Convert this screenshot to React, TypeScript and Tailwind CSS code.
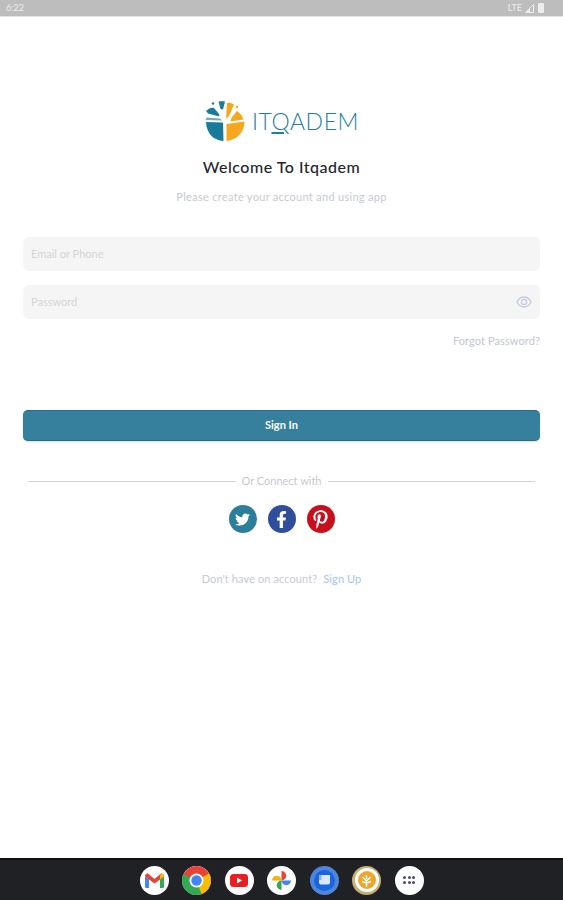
import { FaTwitter, FaFacebookF, FaPinterestP } from "react-icons/fa";

function TreeMark({ size }: { size: number }) {
  return (
    <svg width={size} height={size} viewBox="0 0 41 41">
      <path d="M2 22 L19 22.5 L19.5 41 C9 40.5 2.5 33 2 22 Z" fill="#1a7a99" />
      <path d="M22.5 41 L22.5 24 L40.5 21.5 C40.5 32 33 40 22.5 41 Z" fill="#f5a81f" />
      <path d="M28 17 L33 11 C36 13 38.5 16 39.5 19.5 L26 21.5 Z" fill="#f5a81f" />
      <path d="M22 19 L23 3 C25 2.5 28 3 30 4.5 L25.5 15 Z" fill="#f5a81f" />
      <path d="M14.5 1.5 C16.5 1 19 1 21 1.5 L19 9.5 L16.5 9 Z" fill="#1a7a99" />
      <path d="M2 11 C5 8 8 7 10 8 L15 14 L15.5 16.5 L4 13.5 Z" fill="#1a7a99" />
      <path d="M2.5 17.5 L16 18.5 L18 20.5 L1.5 20 Z" fill="#7aa9b8" />
      <circle cx="9" cy="3.5" r="1.2" fill="#1a7a99" />
      <circle cx="33" cy="7" r="1.2" fill="#f5a81f" />
    </svg>
  );
}

function DockIcon({ children, bg = "bg-white" }: { children: React.ReactNode; bg?: string }) {
  return (
    <div className={`flex h-[29px] w-[29px] items-center justify-center overflow-hidden rounded-full ${bg}`}>
      {children}
    </div>
  );
}

function Dock() {
  return (
    <div className="flex h-[42px] items-center justify-center gap-[13.5px] border-t-2 border-[#0e0f11] bg-[#202124]">
      <DockIcon>
        <svg width="19" height="15" viewBox="0 0 19 15">
          <path d="M0 3 L0 13.5 Q0 15 1.5 15 L4 15 L4 6 Z" fill="#4285f4" />
          <path d="M19 3 L19 13.5 Q19 15 17.5 15 L15 15 L15 6 Z" fill="#34a853" />
          <path d="M0 3 Q0 0 3 0.6 L9.5 6 L16 0.6 Q19 0 19 3 L15 6.5 L9.5 10.5 L4 6.5 Z" fill="#ea4335" />
          <path d="M15 2.8 L16 0.6 Q19 0 19 3 L15 6.5 Z" fill="#fbbc04" />
        </svg>
      </DockIcon>
      <DockIcon>
        <svg width="29" height="29" viewBox="0 0 29 29">
          <circle cx="14.5" cy="14.5" r="14.5" fill="#ea4335" />
          <path d="M14.5 14.5 L27 7.5 A14.5 14.5 0 0 1 14.5 29 Z" fill="#fbbc04" />
          <path d="M14.5 14.5 L20 29 A14.5 14.5 0 0 1 1.5 8 Z" fill="#34a853" />
          <circle cx="14.5" cy="14.5" r="7" fill="#fff" />
          <circle cx="14.5" cy="14.5" r="5.2" fill="#4285f4" />
        </svg>
      </DockIcon>
      <DockIcon>
        <svg width="18" height="13" viewBox="0 0 18 13">
          <rect width="18" height="13" rx="3.5" fill="#ea1d25" />
          <path d="M7 3.5 L12 6.5 L7 9.5 Z" fill="#fff" />
        </svg>
      </DockIcon>
      <DockIcon>
        <svg width="21" height="21" viewBox="0 0 21 21">
          <path d="M1 10.5 A4.75 4.75 0 0 1 10.5 10.5 Z" fill="#f5b400" />
          <path d="M10.5 1 A4.75 4.75 0 0 1 10.5 10.5 Z" fill="#ea4335" />
          <path d="M20 10.5 A4.75 4.75 0 0 1 10.5 10.5 Z" fill="#4285f4" />
          <path d="M10.5 20 A4.75 4.75 0 0 1 10.5 10.5 Z" fill="#34a853" />
        </svg>
      </DockIcon>
      <DockIcon bg="bg-[#4f86db]">
        <div className="flex h-[21px] w-[21px] items-center justify-center rounded-full bg-[#1a66e0]">
          <svg width="13" height="12" viewBox="0 0 13 12">
            <path d="M1 1 H12 V8.5 Q12 10.5 10 10.5 H3 Q1 10.5 1 8.5 Z" fill="#dbe7fb" />
            <rect x="1" y="1" width="2.5" height="5" fill="#8db3ef" />
          </svg>
        </div>
      </DockIcon>
      <DockIcon bg="bg-[#c9ae76]">
        <div className="flex h-[24px] w-[24px] items-center justify-center rounded-full bg-white">
          <div className="flex h-[18px] w-[18px] items-center justify-center rounded-full bg-[#f0a62c]">
            <svg width="13" height="13" viewBox="0 0 13 13">
              <path d="M6.5 13 V6 M6.5 7 L2.5 3 M6.5 7 L10.5 3 M6.5 5 V1 M6.5 9 L2 7.5 M6.5 9 L11 7.5" stroke="#fff" strokeWidth="1.4" fill="none" />
            </svg>
          </div>
        </div>
      </DockIcon>
      <DockIcon>
        <div className="grid grid-cols-3 gap-x-[1.5px] gap-y-[2px]">
          {[0, 1, 2, 3, 4, 5].map((dot) => (
            <span key={dot} className="h-[3px] w-[3px] rounded-full bg-[#4a4f7a]" />
          ))}
        </div>
      </DockIcon>
    </div>
  );
}

export default function App() {
  return (
    <div className="flex h-[900px] w-[563px] flex-col overflow-hidden bg-white font-['Lato',sans-serif]">
      {/* Status bar */}
      <div className="flex h-[17px] items-center justify-between border-b border-[#e4e4e4] bg-[#bdbdbd] pl-[6px] pr-[19px] text-[9px] text-[#eeeeee]">
        <span>6:22</span>
        <div className="flex items-center gap-[3px]">
          <span>LTE</span>
          <svg width="9" height="9" viewBox="0 0 9 9">
            <path d="M8.5 0.5 V8.5 H0.5 Z" fill="none" stroke="#eeeeee" strokeWidth="1" />
            <path d="M5 4.5 V8.5 H1 Z" fill="#eeeeee" />
          </svg>
          <span className="ml-[1px] h-[10px] w-[6px] rounded-[1px] bg-[#eeeeee]" />
        </div>
      </div>

      {/* Login form */}
      <div className="flex flex-1 flex-col px-[23px]">
        <div className="mt-[83px] flex items-center justify-center gap-[7px]">
          <TreeMark size={41} />
          <span className="text-[23px] font-light leading-[30px] tracking-[0.6px] text-[#1f7f9f]">
            IT<span className="underline decoration-2 underline-offset-[2px]">Q</span>ADEM
          </span>
        </div>
        <h1 className="mt-[15px] text-center text-[16px] font-medium leading-[22px] tracking-[0.5px] text-[#23262f]">
          Welcome To Itqadem
        </h1>
        <p className="mt-[12px] text-center text-[11px] leading-[14px] tracking-[0.3px] text-[#c6cad3]">
          Please create your account and using app
        </p>

        <div className="mt-[33px] flex h-[34px] items-center rounded-[6px] bg-[#f5f5f5] px-[8px] text-[11px] text-[#d4d4d8]">
          Email or Phone
        </div>
        <div className="mt-[14px] flex h-[34px] items-center justify-between rounded-[6px] bg-[#f5f5f5] pl-[8px] pr-[8px] text-[11px] text-[#d4d4d8]">
          <span>Password</span>
          <svg width="16" height="12" viewBox="0 0 16 12" fill="none" stroke="#c3cbe0" strokeWidth="1.3">
            <path d="M0.8 6 C3 2 5.5 1 8 1 C10.5 1 13 2 15.2 6 C13 10 10.5 11 8 11 C5.5 11 3 10 0.8 6 Z" />
            <circle cx="8" cy="6" r="2.6" />
          </svg>
        </div>
        <div className="mt-[15px] text-right text-[11px] leading-[14px] tracking-[0.1px] text-[#c2c6cf]">
          Forgot Password?
        </div>

        <button className="mt-[62px] h-[31px] rounded-[5px] border-t border-b border-[#1f6f8d] bg-[#367f9d] text-[11px] font-bold text-white shadow-[0_1px_2px_rgba(0,0,0,0.15)]">
          Sign In
        </button>

        <div className="mt-[33px] flex items-center gap-[6px] px-[5px]">
          <div className="h-px flex-1 bg-[#d2d2d2]" />
          <span className="text-[11px] leading-[14px] text-[#c8c8ce]">Or Connect with</span>
          <div className="h-px flex-1 bg-[#d2d2d2]" />
        </div>

        <div className="mt-[17px] flex justify-center gap-[11px]">
          <div className="flex h-[28px] w-[28px] items-center justify-center rounded-full bg-[#2c7f9c] text-[15px] text-white">
            <FaTwitter />
          </div>
          <div className="flex h-[28px] w-[28px] items-center justify-center rounded-full bg-[#2f4f9c] text-[17px] text-white">
            <FaFacebookF />
          </div>
          <div className="flex h-[28px] w-[28px] items-center justify-center rounded-full bg-[#c8101c] text-[19px] text-white">
            <FaPinterestP />
          </div>
        </div>

        <div className="mt-[39px] flex justify-center gap-[6px] text-[11px] leading-[14px] tracking-[0.1px]">
          <span className="text-[#c6cad3]">Don't have on account?</span>
          <span className="text-[#a3c4f3]">Sign Up</span>
        </div>
      </div>

      <Dock />
    </div>
  );
}
